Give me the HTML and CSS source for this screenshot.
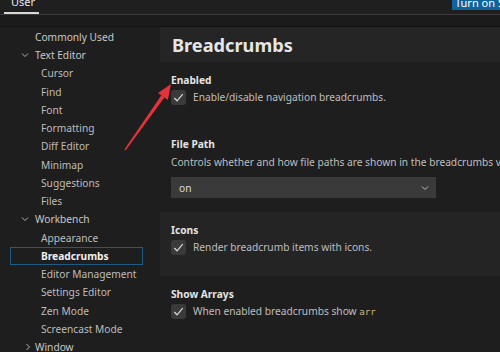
FILE: index.html
```html
<!DOCTYPE html>
<html>
<head>
<meta charset="utf-8">
<link rel="stylesheet" href="styles.css">
</head>
<body>
<div class="page">
  <div class="topbar">
    <div class="tab"><span class="tab-label">User</span></div>
    <div class="turn-on"><span class="turn-label">Turn on Settings Sync</span></div>
  </div>
  <div class="band"></div>
  <div class="main">
    <nav class="sidebar">
      <div class="row l1">Commonly Used</div>
      <div class="row l1"><svg class="chev" viewBox="0 0 8 8"><path d="M1 2.5 L4 5.5 L7 2.5" /></svg>Text Editor</div>
      <div class="row l2">Cursor</div>
      <div class="row l2">Find</div>
      <div class="row l2">Font</div>
      <div class="row l2">Formatting</div>
      <div class="row l2">Diff Editor</div>
      <div class="row l2">Minimap</div>
      <div class="row l2">Suggestions</div>
      <div class="row l2">Files</div>
      <div class="row l1"><svg class="chev" viewBox="0 0 8 8"><path d="M1 2.5 L4 5.5 L7 2.5" /></svg>Workbench</div>
      <div class="row l2">Appearance</div>
      <div class="row l2 selected">Breadcrumbs</div>
      <div class="row l2">Editor Management</div>
      <div class="row l2">Settings Editor</div>
      <div class="row l2">Zen Mode</div>
      <div class="row l2">Screencast Mode</div>
      <div class="row l1"><svg class="chev right" viewBox="0 0 8 8"><path d="M2.5 1 L5.5 4 L2.5 7" /></svg>Window</div>
    </nav>
    <section class="content">
      <div class="header"><h1 class="title">Breadcrumbs</h1></div>
      <div class="item">
        <div class="item-title">Enabled</div>
        <div class="check-row"><span class="checkbox"><svg viewBox="0 0 16 16"><path d="M3.5 8.5 L6.5 11.5 L12.5 4.5"/></svg></span><span class="desc">Enable/disable navigation breadcrumbs.</span></div>
      </div>
      <div class="item item-select">
        <div class="item-title">File Path</div>
        <div class="desc-line">Controls whether and how file paths are shown in the breadcrumbs view.</div>
        <div class="select"><span>on</span><svg class="select-chev" viewBox="0 0 10 10"><path d="M2 3.5 L5 6.5 L8 3.5"/></svg></div>
      </div>
      <div class="item hover">
        <div class="item-title">Icons</div>
        <div class="check-row"><span class="checkbox"><svg viewBox="0 0 16 16"><path d="M3.5 8.5 L6.5 11.5 L12.5 4.5"/></svg></span><span class="desc">Render breadcrumb items with icons.</span></div>
      </div>
      <div class="item">
        <div class="item-title">Show Arrays</div>
        <div class="check-row"><span class="checkbox"><svg viewBox="0 0 16 16"><path d="M3.5 8.5 L6.5 11.5 L12.5 4.5"/></svg></span><span class="desc">When enabled breadcrumbs show <code class="code">arr</code></span></div>
      </div>
    </section>
  </div>
  <svg class="arrow" viewBox="0 0 500 352" width="500" height="352">
    <polygon points="124.4,149.4 125.6,150.6 164.4,97.4 161.4,95.3" />
    <polygon points="171,84 158,92.9 167.8,99.9" />
  </svg>
</div>
</body>
</html>
```
FILE: styles.css
```css
* { box-sizing: border-box; }
html, body { margin: 0; padding: 0; }
body {
  width: 500px;
  height: 352px;
  overflow: hidden;
  background: #1e1e1e;
  font-family: "Noto Sans", "Open Sans", sans-serif;
  color: #c4c4c4;
}
.page { position: relative; width: 500px; height: 352px; overflow: hidden; }

.topbar {
  height: 15px;
  display: flex;
  justify-content: space-between;
  align-items: flex-end;
  background: #1f1f1f;
  border-bottom: 1px solid #3b3b3b;
}
.tab {
  margin-left: 4px;
  width: 35px;
  height: 15px;
  border-bottom: 2px solid #d9d9d9;
  overflow: hidden;
  display: flex;
  align-items: flex-end;
}
.tab-label {
  font-size: 11px;
  line-height: 14px;
  color: #e8e8e8;
  margin-left: 7px;
  margin-bottom: 3px;
}
.turn-on {
  width: 48px;
  height: 15px;
  align-self: flex-start;
  margin-top: -5px;
  background: #0e639c;
  overflow: hidden;
  white-space: nowrap;
  padding-left: 3px;
  display: flex;
  align-items: flex-end;
}
.turn-label { font-size: 11px; line-height: 14px; color: #fff; }

.band {
  height: 12px;
  background: #1b1b1b;
  border-bottom: 1px solid #121212;
}

.main { display: flex; height: 325px; }

.sidebar {
  width: 160px;
  flex: none;
  padding-top: 1px;
}
.row {
  height: 18.24px;
  line-height: 18.24px;
  font-size: 10.2px;
  white-space: nowrap;
  display: flex;
  align-items: center;
}
.l1 { padding-left: 35px; color: #c8c8c8; }
.l2 { padding-left: 41px; color: #bdbdbd; }
.chev {
  width: 8px; height: 8px;
  margin-left: -14px; margin-right: 6px;
  fill: none; stroke: #b0b0b0; stroke-width: 1;
}
.chev.right { margin-left: -11px; margin-right: 3px; }
.selected {
  margin-left: 10px;
  margin-right: 17px;
  padding-left: 30px;
  border: 1px solid #1f5c85;
  font-weight: bold;
  color: #f0f0f0;
}

.content { flex: 1; min-width: 0; overflow: hidden; }
.header {
  height: 35px;
  background: #252526;
  padding-left: 12px;
  display: flex;
  align-items: center;
}
.title {
  margin: 0;
  font-size: 18.2px;
  font-weight: bold;
  color: #e6e6e6;
  line-height: 24px;
}

.item { padding: 9px 0 21px 11px; }
.item-select { padding-bottom: 14px; }
.hover { background: #242425; }
.item-title {
  font-size: 10.2px;
  font-weight: bold;
  line-height: 18px;
  color: #e4e4e4;
}
.check-row {
  display: flex;
  align-items: center;
  height: 16px;
  white-space: nowrap;
}
.checkbox {
  width: 15px; height: 15px;
  flex: none;
  background: #3a3a3a;
  border-radius: 3px;
  margin-right: 7px;
  display: flex;
}
.checkbox svg { width: 15px; height: 15px; fill: none; stroke: #d8d8d8; stroke-width: 1.3; }
.desc, .desc-line {
  font-size: 10.2px;
  color: #bebebe;
}
.desc-line { line-height: 18px; white-space: nowrap; }
.code {
  font-family: "DejaVu Sans Mono", monospace;
  font-size: 9.2px;
  color: #d7ba7d;
}
.select {
  margin-top: 6px;
  width: 265px;
  height: 21px;
  background: #3a3a3a;
  display: flex;
  align-items: center;
  justify-content: space-between;
  padding: 0 6px 0 8px;
  font-size: 10.2px;
  color: #dcdcdc;
}
.select-chev { width: 10px; height: 10px; fill: none; stroke: #bdbdbd; stroke-width: 1; }

.arrow { position: absolute; left: 0; top: 0; pointer-events: none; }
.arrow polygon { fill: #e5323b; }
```
